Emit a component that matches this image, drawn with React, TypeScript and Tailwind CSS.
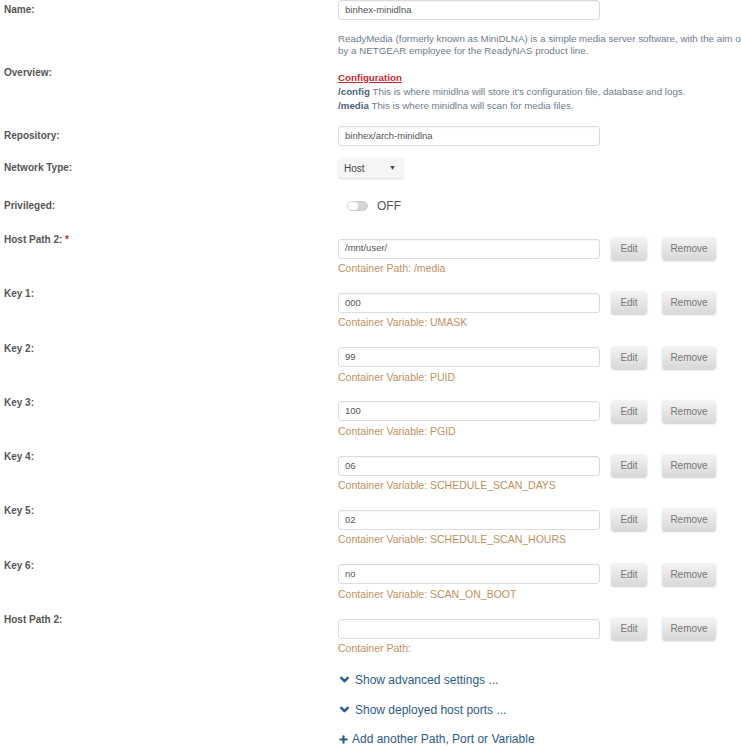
import { ChevronDown, Plus } from 'lucide-react';

const keys = [
  { label: 'Host Path 2:', required: true, value: '/mnt/user/', hint: 'Container Path: /media' },
  { label: 'Key 1:', value: '000', hint: 'Container Variable: UMASK' },
  { label: 'Key 2:', value: '99', hint: 'Container Variable: PUID' },
  { label: 'Key 3:', value: '100', hint: 'Container Variable: PGID' },
  { label: 'Key 4:', value: '06', hint: 'Container Variable: SCHEDULE_SCAN_DAYS' },
  { label: 'Key 5:', value: '02', hint: 'Container Variable: SCHEDULE_SCAN_HOURS' },
  { label: 'Key 6:', value: 'no', hint: 'Container Variable: SCAN_ON_BOOT' },
  { label: 'Host Path 2:', value: '', hint: 'Container Path:' },
];

function Label({ children }: { children: React.ReactNode }) {
  return <div className="w-[338px] shrink-0 pl-1 text-[10px] font-bold leading-3 text-[#555]">{children}</div>;
}

function TextBox({ value }: { value: string }) {
  return (
    <div className="flex h-5 w-[262px] items-center rounded-[3px] border border-[#dcdcdc] bg-white px-[6px] text-[9.5px] text-[#555] shadow-[inset_0_1px_1px_rgba(0,0,0,0.04)]">
      {value}
    </div>
  );
}

function Btn({ children, w }: { children: React.ReactNode; w: string }) {
  return (
    <div
      className={`${w} flex h-[23px] items-center justify-center rounded-[3px] bg-gradient-to-b from-[#f4f4f4] to-[#d8d8d8] text-[10px] text-[#777] shadow-[0_1px_2px_rgba(0,0,0,0.2)]`}
    >
      {children}
    </div>
  );
}

export default function App() {
  return (
    <div className="h-[750px] w-[741px] overflow-hidden bg-white font-['Liberation_Sans',Arial,sans-serif]">
      {/* Name */}
      <div className="flex items-center">
        <Label>Name:</Label>
        <TextBox value="binhex-minidlna" />
      </div>

      {/* Overview */}
      <div className="mt-[13px] flex items-center">
        <Label>Overview:</Label>
        <div className="whitespace-nowrap text-[9.75px] text-[#6f7c8c]">
          <p className="leading-3">ReadyMedia (formerly known as MiniDLNA) is a simple media server software, with the aim of being fully</p>
          <p className="leading-3">by a NETGEAR employee for the ReadyNAS product line.</p>
          <p className="mt-[14px] font-bold leading-[14px] text-[#c1272d] underline">Configuration</p>
          <p className="leading-[14px]">
            <b className="text-[#4b6280]">/config</b> This is where minidlna will store it's configuration file, database and logs.
          </p>
          <p className="leading-[14px]">
            <b className="text-[#4b6280]">/media</b> This is where minidlna will scan for media files.
          </p>
        </div>
      </div>

      {/* Repository */}
      <div className="mt-[13px] flex items-center">
        <Label>Repository:</Label>
        <TextBox value="binhex/arch-minidlna" />
      </div>

      {/* Network type */}
      <div className="mt-[12px] flex items-center">
        <Label>Network Type:</Label>
        <div className="flex h-5 w-[66px] items-center justify-between rounded-[3px] bg-[#f6f6f6] pl-[6px] pr-[8px] text-[10px] text-[#444] shadow-[0_1px_2px_rgba(0,0,0,0.15)]">
          <span>Host</span>
          <span className="text-[7px]">▼</span>
        </div>
      </div>

      {/* Privileged */}
      <div className="mt-[19px] flex items-center">
        <Label>Privileged:</Label>
        <div className="ml-[9px] flex h-[10px] w-[21px] rounded-full border border-[#cfcfcf] bg-[#d6d6d6]">
          <div className="h-full w-[10px] rounded-full bg-white" />
        </div>
        <span className="ml-[9px] text-[12px] text-[#555]">OFF</span>
      </div>

      {/* Keys */}
      <div className="mt-[19px]">
        {keys.map((k, i) => (
          <div key={i} className="flex h-[54.3px]">
            <Label>
              {k.label}
              {k.required && <span className="text-[#c1272d]"> *</span>}
            </Label>
            <div className="pt-[3px]">
              <div className="flex items-center">
                <TextBox value={k.value} />
                <div className="ml-[11px]">
                  <Btn w="w-[36px]">Edit</Btn>
                </div>
                <div className="ml-[15px]">
                  <Btn w="w-[54px]">Remove</Btn>
                </div>
              </div>
              <div className="mt-[2px] text-[10.5px] leading-3 text-[#c09160]">{k.hint}</div>
            </div>
          </div>
        ))}
      </div>

      {/* Links */}
      <div className="ml-[338px] mt-[5px] flex flex-col gap-[17px] text-[12px] leading-3 text-[#2d5b88]">
        <div className="flex items-center gap-[4px]">
          <ChevronDown size={13} strokeWidth={4.5} />
          <span>Show advanced settings ...</span>
        </div>
        <div className="flex items-center gap-[4px]">
          <ChevronDown size={13} strokeWidth={4.5} />
          <span>Show deployed host ports ...</span>
        </div>
        <div className="flex items-center gap-[3px]">
          <Plus size={11} strokeWidth={4.5} />
          <span>Add another Path, Port or Variable</span>
        </div>
      </div>
    </div>
  );
}
